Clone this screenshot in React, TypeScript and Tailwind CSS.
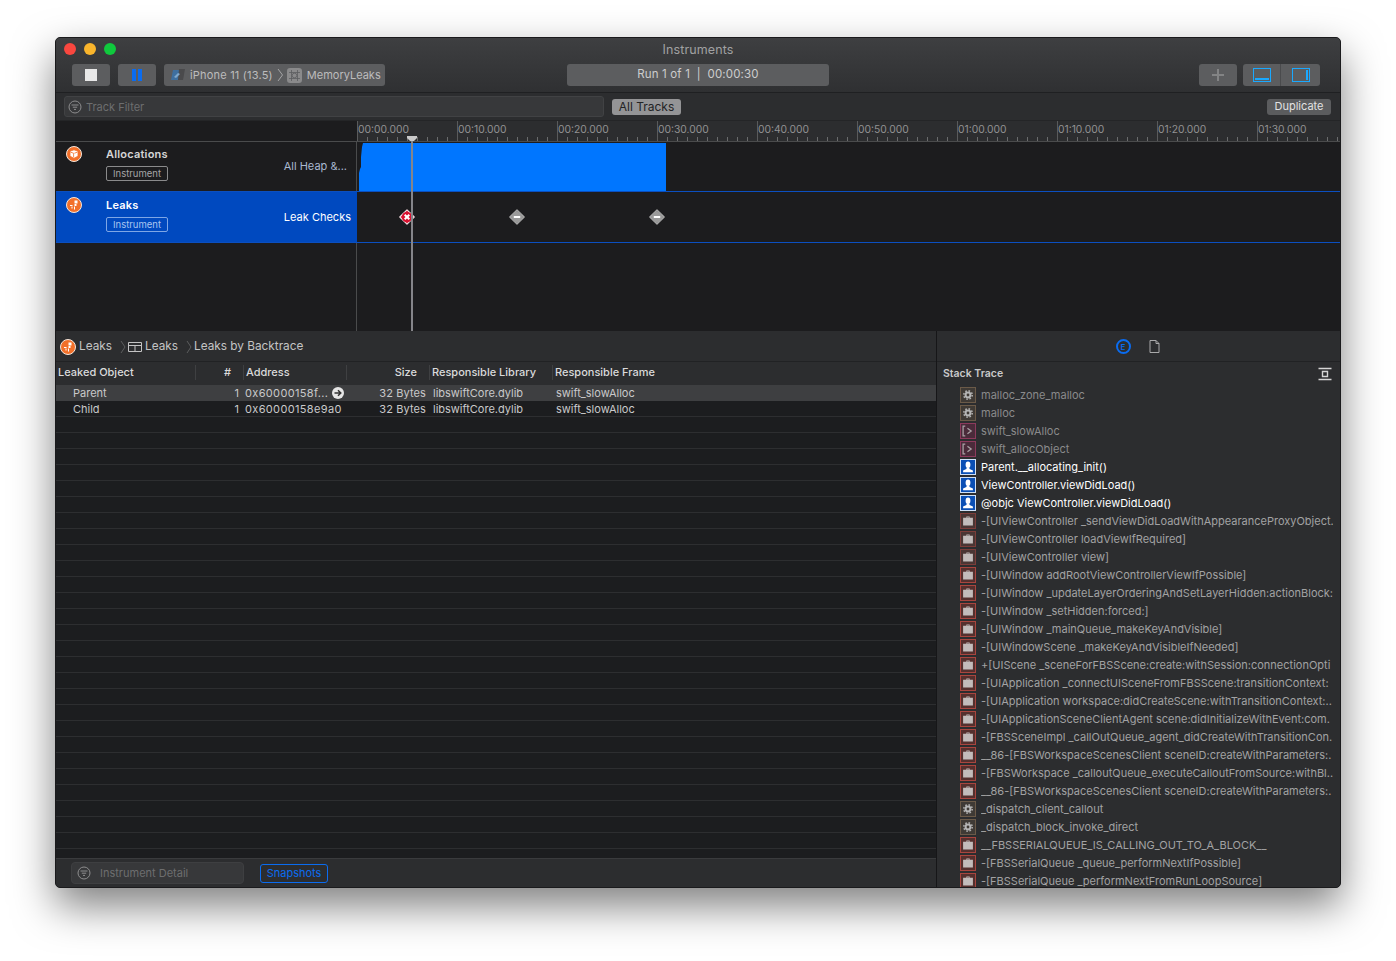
import type { ReactNode } from "react";

const font = { fontFamily: "Inter, 'Liberation Sans', sans-serif" };

type FrameKind = "gear" | "term" | "user" | "case";

const FRAMES: [FrameKind, string][] = [
  ["gear", "malloc_zone_malloc"],
  ["gear", "malloc"],
  ["term", "swift_slowAlloc"],
  ["term", "swift_allocObject"],
  ["user", "Parent.__allocating_init()"],
  ["user", "ViewController.viewDidLoad()"],
  ["user", "@objc ViewController.viewDidLoad()"],
  ["case", "-[UIViewController _sendViewDidLoadWithAppearanceProxyObject."],
  ["case", "-[UIViewController loadViewIfRequired]"],
  ["case", "-[UIViewController view]"],
  ["case", "-[UIWindow addRootViewControllerViewIfPossible]"],
  ["case", "-[UIWindow _updateLayerOrderingAndSetLayerHidden:actionBlock:"],
  ["case", "-[UIWindow _setHidden:forced:]"],
  ["case", "-[UIWindow _mainQueue_makeKeyAndVisible]"],
  ["case", "-[UIWindowScene _makeKeyAndVisibleIfNeeded]"],
  ["case", "+[UIScene _sceneForFBSScene:create:withSession:connectionOpti"],
  ["case", "-[UIApplication _connectUISceneFromFBSScene:transitionContext:"],
  ["case", "-[UIApplication workspace:didCreateScene:withTransitionContext:.."],
  ["case", "-[UIApplicationSceneClientAgent scene:didInitializeWithEvent:com."],
  ["case", "-[FBSSceneImpl _callOutQueue_agent_didCreateWithTransitionCon."],
  ["case", "__86-[FBSWorkspaceScenesClient sceneID:createWithParameters:."],
  ["case", "-[FBSWorkspace _calloutQueue_executeCalloutFromSource:withBl.."],
  ["case", "__86-[FBSWorkspaceScenesClient sceneID:createWithParameters:."],
  ["gear", "_dispatch_client_callout"],
  ["gear", "_dispatch_block_invoke_direct"],
  ["case", "__FBSSERIALQUEUE_IS_CALLING_OUT_TO_A_BLOCK__"],
  ["case", "-[FBSSerialQueue _queue_performNextIfPossible]"],
  ["case", "-[FBSSerialQueue _performNextFromRunLoopSource]"],
];

const RULER = [
  "00:00.000",
  "00:10.000",
  "00:20.000",
  "00:30.000",
  "00:40.000",
  "00:50.000",
  "01:00.000",
  "01:10.000",
  "01:20.000",
  "01:30.000",
];

function FilterIcon() {
  return (
    <svg width="14" height="14" viewBox="0 0 14 14" fill="none" stroke="#8d8d8e" className="shrink-0">
      <circle cx="7" cy="7" r="6" />
      <path d="M3.5 5h7M4.8 7.2h4.4M6 9.4h2" />
    </svg>
  );
}

function TrackIcon({ kind }: { kind: "box" | "leak" }) {
  return (
    <svg width="16" height="16" viewBox="0 0 16 16" className="shrink-0">
      <circle cx="8" cy="8" r="7.5" fill="#f2702a" stroke="#f4e6dc" strokeWidth="1" />
      {kind === "box" ? (
        <path d="M4 5.2 8 3.8l4 1.4v5L8 12.2 4 10.2zM4.6 6.2 7.6 7.2v3.8M8.4 7.2l3-1" fill="#fff" stroke="#f2702a" strokeWidth="0.8" />
      ) : (
        <path d="M8.5 3.5h3v3h-3zM8.5 7h2v2h-2zM4 8h2.5v1H4zM8 9.5h1v3H8zM5.5 9.5h1v2h-1z" fill="#fff" />
      )}
    </svg>
  );
}

function Diamond({ error }: { error?: boolean }) {
  return (
    <svg width="16" height="16" viewBox="0 0 16 16">
      <path
        d="M8 .8 15.2 8 8 15.2.8 8z"
        fill={error ? "#d8112f" : "#8f8f90"}
        stroke={error ? "#f3dfe3" : "#a8a8a8"}
        strokeWidth="1.2"
        strokeLinejoin="round"
      />
      <circle cx="8" cy="8" r="5.2" fill={error ? "#d8112f" : "#9a9a9a"} />
      {error ? (
        <path d="m5.7 5.7 4.6 4.6m0-4.6-4.6 4.6" stroke="#fff" strokeWidth="2" />
      ) : (
        <path d="M4.8 8h6.4" stroke="#fff" strokeWidth="2" />
      )}
    </svg>
  );
}

function FrameIcon({ kind, dim }: { kind: FrameKind; dim: boolean }) {
  if (kind === "user") {
    return (
      <span className="flex h-4 w-4 shrink-0 items-center justify-center border border-[#cfe0f5] bg-[#0a4fb5]">
        <svg width="12" height="12" viewBox="0 0 11 11" fill="#fff">
          <ellipse cx="5.5" cy="3.4" rx="2.2" ry="3" />
          <path d="M4.4 6h2.2l.4 1.4 3 1.2V10.4H1V8.6l3-1.2z" />
        </svg>
      </span>
    );
  }
  if (kind === "term") {
    return (
      <span className="flex h-4 w-4 shrink-0 items-center justify-center border border-[#8c3a5c] bg-[#4a2b3a]">
        <svg width="12" height="12" viewBox="0 0 11 11" fill="none" stroke="#a8a0a4" strokeWidth="1.2">
          <path d="M3 1H1v9h2M5 3l3.4 2.5L5 8" />
        </svg>
      </span>
    );
  }
  if (kind === "gear") {
    return (
      <span className="flex h-4 w-4 shrink-0 items-center justify-center border border-[#6b5a48] bg-[#3f3a35]">
        <svg width="12" height="12" viewBox="0 0 12 12" fill="none" stroke="#b5b5b5">
          <circle cx="6" cy="6" r="2.4" strokeWidth="2" />
          <circle cx="6" cy="6" r="4.2" strokeWidth="1.5" strokeDasharray="1.6 1.7" />
        </svg>
      </span>
    );
  }
  return (
    <span
      className={
        dim
          ? "flex h-4 w-4 shrink-0 items-center justify-center border border-[#7c3d39] bg-[#4a3634]"
          : "flex h-4 w-4 shrink-0 items-center justify-center border border-[#a8453e] bg-[#54302e]"
      }
    >
      <svg width="12" height="12" viewBox="0 0 11 11" fill="#c2bcbb">
        <path d="M4 1.4h3v1.2h3V9.6H1V2.6h3zM4.8 2.2v.5h1.4v-.5z" />
      </svg>
    </span>
  );
}

function ToolButton({ children, className }: { children: ReactNode; className: string }) {
  return (
    <div className={`flex h-[22px] items-center justify-center rounded-[3px] bg-[#5c5d5f] ${className}`}>
      {children}
    </div>
  );
}

function Toolbar() {
  return (
    <div className="relative h-[55px] shrink-0 border-b border-[#1f2022] bg-gradient-to-b from-[#3e3f41] to-[#2f3032]">
      <div className="absolute left-[8px] top-[5px] flex gap-[8px]">
        <span className="h-3 w-3 rounded-full bg-[#f9473f]" />
        <span className="h-3 w-3 rounded-full bg-[#f9b52c]" />
        <span className="h-3 w-3 rounded-full bg-[#10c93d]" />
      </div>
      <div className="flex h-[26px] items-start justify-center pt-[4px] text-[12.5px] leading-4 tracking-[0.1px] text-[#a1a1a2]">
        Instruments
      </div>
      <div className="flex items-center pl-4">
        <ToolButton className="w-[38px]">
          <span className="h-3 w-3 bg-[#e8e8e8]" />
        </ToolButton>
        <ToolButton className="ml-2 w-[38px] gap-[2px]">
          <span className="h-3 w-1 bg-[#0a6cf0]" />
          <span className="h-3 w-1 bg-[#0a6cf0]" />
        </ToolButton>
        <ToolButton className="ml-2 w-[221px] justify-start pl-[6px] text-[11px] text-[#bcbcbd]">
          <svg width="15" height="14" viewBox="0 0 15 14" className="shrink-0">
            <path d="M3 2h11l-2 10H1z" fill="#3e6f9f" />
            <path d="M9 1h6l-2 11H8z" fill="#4a4a4c" />
            <path d="M4 9l4-4 2 1-4 4z" fill="#7fa8cc" />
          </svg>
          <span className="ml-[5px] whitespace-nowrap tracking-[0.2px]">iPhone 11 (13.5)</span>
          <svg width="7" height="14" viewBox="0 0 7 14" fill="none" stroke="#a5a5a6" className="ml-[4px] shrink-0">
            <path d="m1 1 4.5 6L1 13" />
          </svg>
          <span className="ml-[3px] flex h-[15px] w-[15px] shrink-0 items-center justify-center rounded-[3px] bg-[#8a8a8b]">
            <svg width="11" height="11" viewBox="0 0 11 11" fill="none" stroke="#5c5d5f" strokeWidth="0.8">
              <circle cx="5.5" cy="5.5" r="2.3" />
              <path d="M0 2.5h11M0 8.5h11M2.5 0v11M8.5 0v11" />
            </svg>
          </span>
          <span className="ml-[5px] whitespace-nowrap">MemoryLeaks</span>
        </ToolButton>
        <ToolButton className="ml-[182px] w-[262px] text-[11.5px] tracking-[0.15px] text-[#cdcdce]">
          <span className="whitespace-pre">Run 1 of 1  |  00:00:30</span>
        </ToolButton>
        <ToolButton className="ml-[370px] w-[38px]">
          <svg width="14" height="14" viewBox="0 0 14 14" stroke="#838485" strokeWidth="2">
            <path d="M7 1v12M1 7h12" />
          </svg>
        </ToolButton>
        <ToolButton className="ml-[6px] w-[77px]">
          <div className="flex h-full w-[38px] items-center justify-center border-r border-[#4a4b4d]">
            <span className="flex h-[14px] w-[18px] items-end border border-[#1aa9ff] p-[1px]">
              <span className="h-[2px] w-full bg-[#1aa9ff]" />
            </span>
          </div>
          <div className="flex h-full flex-1 items-center justify-center">
            <span className="flex h-[14px] w-[18px] justify-end border border-[#1aa9ff] p-[1px]">
              <span className="h-full w-[2px] bg-[#1aa9ff]" />
            </span>
          </div>
        </ToolButton>
      </div>
    </div>
  );
}

function FilterBar() {
  return (
    <div className="flex h-[28px] shrink-0 items-center border-b border-[#242527] bg-[#2c2d2f] pl-2">
      <div className="flex h-[21px] w-[540px] items-center gap-[4px] rounded-[3px] border border-[#414244] bg-[#37383a] pl-[3px] text-[11px] text-[#6d6e6f]">
        <FilterIcon />
        <span className="pt-[1px]">Track Filter</span>
      </div>
      <div className="ml-2 flex h-4 w-[69px] items-center justify-center rounded-[3px] bg-[#949496] text-[12px] text-[#232325]">
        All Tracks
      </div>
      <div className="ml-[586px] flex h-4 w-[64px] items-center justify-center rounded-[3px] bg-[#5b5c5e] text-[11px] text-[#e2e2e2]">
        Duplicate
      </div>
    </div>
  );
}

function Ruler() {
  return (
    <div className="flex h-[21px] shrink-0 border-b border-[#4a4b4c]">
      <div className="w-[301px] shrink-0 bg-[#1c1c1e]" />
      <div className="flex flex-1 overflow-hidden bg-[#2c2d2f]">
        {RULER.map((t) => (
          <div key={t} className="relative h-full w-[100px] shrink-0 border-l border-[#5a5b5c] text-[10.3px] leading-[17px] text-[#929293]">
            {t}
            <svg width="100" height="5" className="absolute bottom-0 left-0" stroke="#6a6b6c">
              <path d="M9.5 1v4M19.5 1v4M29.5 1v4M39.5 1v4M49.5 1v4M59.5 1v4M69.5 1v4M79.5 1v4M89.5 1v4" />
            </svg>
          </div>
        ))}
      </div>
    </div>
  );
}

function TrackHeader({
  title,
  detail,
  kind,
  selected,
}: {
  title: string;
  detail: string;
  kind: "box" | "leak";
  selected?: boolean;
}) {
  return (
    <div
      className={
        selected
          ? "flex h-full w-[301px] shrink-0 bg-[#0049bf] pl-[10px] pt-[5px] text-white"
          : "flex h-full w-[301px] shrink-0 border-r border-[#4a4b4c] bg-[#1c1c1e] pl-[10px] pt-[4px] text-[#d6d6d6]"
      }
    >
      <TrackIcon kind={kind} />
      <div className="ml-[24px] flex flex-col items-start">
        <div className="text-[11px] font-semibold leading-4 tracking-[0.2px]">{title}</div>
        <div
          className={
            selected
              ? "mt-[4px] flex h-[15px] w-[62px] items-center justify-center rounded-[2px] border border-[#7ea6e6] pt-[1px] text-[9.5px] text-[#a9c5f0]"
              : "mt-[4px] flex h-[15px] w-[62px] items-center justify-center rounded-[2px] border border-[#8a8a8b] pt-[1px] text-[9.5px] text-[#a5a5a6]"
          }
        >
          Instrument
        </div>
      </div>
      <div
        className={
          selected
            ? "ml-auto mr-[6px] mt-[12px] whitespace-nowrap text-[11px] leading-4 text-white"
            : "ml-auto mr-[9px] mt-[12px] whitespace-nowrap text-[11px] leading-4 text-[#a9b8d0]"
        }
      >
        {detail}
      </div>
    </div>
  );
}

function Timeline() {
  return (
    <div className="relative shrink-0">
      <Ruler />
      <div className="flex h-[50px] border-b border-[#0b4fc0]">
        <TrackHeader title="Allocations" detail="All Heap &..." kind="box" />
        <div className="flex-1 bg-[#1c1c1e] pt-[1px]">
          <svg width="309" height="48" viewBox="0 0 309 48" className="block">
            <path d="M2 48V30l1-4 1-2V14l1-10 1-4h303v48z" fill="#0076ff" />
          </svg>
        </div>
      </div>
      <div className="flex h-[51px] border-b border-[#0b4fc0]">
        <TrackHeader title="Leaks" detail="Leak Checks" kind="leak" selected />
        <div className="relative flex-1 bg-[#1c1c1e]">
          <span className="absolute left-[42px] top-[17px]">
            <Diamond error />
          </span>
          <span className="absolute left-[152px] top-[17px]">
            <Diamond />
          </span>
          <span className="absolute left-[292px] top-[17px]">
            <Diamond />
          </span>
        </div>
      </div>
      <div className="flex h-[88px]">
        <div className="w-[301px] shrink-0 border-r border-[#4a4b4c] bg-[#1c1c1e]" />
        <div className="flex-1 bg-[#1c1c1e]" />
      </div>
      {/* playhead */}
      <div className="absolute bottom-0 left-[355px] top-[16px] w-[2px] bg-[#85858a]" />
      <svg width="10" height="5" className="absolute left-[351px] top-[15px]">
        <path d="M0 0h10v2L7 5H3L0 2z" fill="#c9c9c9" />
      </svg>
    </div>
  );
}

function Breadcrumb() {
  const chevron = (
    <svg width="6" height="14" viewBox="0 0 6 14" fill="none" stroke="#5c5d5e" className="shrink-0">
      <path d="m1 1 4 6-4 6" />
    </svg>
  );
  return (
    <div className="flex h-[31px] shrink-0 items-center border-b border-[#212224] bg-[#2c2d2f] pl-[4px] pt-[2px] text-[11.8px] text-[#c4c4c5]">
      <TrackIcon kind="leak" />
      <span className="ml-[3px]">Leaks</span>
      <span className="ml-2">{chevron}</span>
      <svg width="14" height="10" viewBox="0 0 14 10" fill="none" stroke="#c4c4c5" className="ml-[2px]">
        <path d="M.5.5h13v9H.5zM.5 3.5h13M7 3.5v6" />
      </svg>
      <span className="ml-[3px]">Leaks</span>
      <span className="ml-2">{chevron}</span>
      <span className="ml-[2px]">Leaks by Backtrace</span>
    </div>
  );
}

const GRID = "grid grid-cols-[140px_48px_103px_83px_123px_1fr]";

function LeakRow({ name, address, active }: { name: string; address: string; active?: boolean }) {
  return (
    <div
      className={
        active
          ? `${GRID} h-4 bg-[#3e3f41] text-[11px] leading-4 text-[#c9c9ca]`
          : `${GRID} h-4 border-b border-[#2d2e30] text-[11px] leading-4 text-[#c9c9ca]`
      }
    >
      <div className="pl-[17px]">{name}</div>
      <div className="pr-[5px] text-right">1</div>
      <div className="flex items-center whitespace-nowrap pl-[1px] tracking-[0.35px]">
        {address}
        {active && (
          <svg width="12" height="12" viewBox="0 0 12 12" className="ml-[4px]">
            <circle cx="6" cy="6" r="6" fill="#e6e6e6" />
            <path d="M2.5 6h6M6 3.2 8.8 6 6 8.8" fill="none" stroke="#333" strokeWidth="1.5" />
          </svg>
        )}
      </div>
      <div className="pr-[4px] text-right tracking-[0.1px]">32 Bytes</div>
      <div className="pl-[3px]">libswiftCore.dylib</div>
      <div className="pl-[3px]">swift_slowAlloc</div>
    </div>
  );
}

function LeakTable() {
  const headerCell = "flex h-[15px] items-center border-r border-[#3f4042]";
  return (
    <div className="flex min-w-0 flex-1 flex-col border-r border-[#161618] bg-[#1c1d1f]">
      <Breadcrumb />
      <div className={`${GRID} h-[23px] shrink-0 items-center bg-[#2c2d2f] pb-[2px] text-[11px] font-medium text-[#dadadb]`}>
        <div className={`${headerCell} pl-[2px]`}>Leaked Object</div>
        <div className={`${headerCell} justify-end pr-3`}>#</div>
        <div className={`${headerCell} pl-[2px]`}>Address</div>
        <div className={`${headerCell} justify-end pr-3`}>Size</div>
        <div className={`${headerCell} pl-[2px]`}>Responsible Library</div>
        <div className="pl-[2px]">Responsible Frame</div>
      </div>
      <div className="min-h-0 flex-1 overflow-hidden">
        <LeakRow name="Parent" address="0x60000158f..." active />
        <LeakRow name="Child" address="0x60000158e9a0" />
        {Array.from({ length: 28 }, (_, i) => (
          <div key={i} className="h-4 border-b border-[#2d2e30]" />
        ))}
      </div>
      <div className="flex h-[29px] shrink-0 items-center border-t border-[#3a3b3d] bg-[#2c2d2f] pl-[15px]">
        <div className="flex h-[22px] w-[173px] items-center gap-[9px] rounded-[4px] border border-[#3e3f41] bg-[#37383a] pl-[5px] text-[11px] text-[#6d6e6f]">
          <FilterIcon />
          Instrument Detail
        </div>
        <div className="ml-[16px] flex h-[19px] w-[68px] items-center justify-center rounded-[3px] border border-[#0a6cf0] text-[11px] text-[#0a6cf0]">
          Snapshots
        </div>
      </div>
    </div>
  );
}

function StackPanel() {
  return (
    <div className="flex w-[403px] shrink-0 flex-col bg-[#2c2d2f]">
      <div className="flex h-[31px] shrink-0 items-center justify-center gap-[18px] border-b border-[#212224] pr-[2px] pt-[1px]">
        <span className="flex h-[15px] w-[15px] items-center justify-center rounded-full border-2 border-[#0a6cf0] text-[8px] font-semibold leading-none text-[#0a6cf0]">
          E
        </span>
        <svg width="11" height="13" viewBox="0 0 11 13" fill="none" stroke="#a9a9aa">
          <path d="M1 .5h6l3 3v9H1zM7 .5v3h3" />
        </svg>
      </div>
      <div className="flex h-[24px] shrink-0 items-center justify-between pl-[6px] pr-[8px] text-[10.5px] font-semibold text-[#c9c9ca]">
        Stack Trace
        <svg width="14" height="14" viewBox="0 0 14 14" fill="none" stroke="#d5d5d5">
          <path d="M.5 1.5h13M.5 12.5h13M4.5 4.5h5v5h-5z" strokeWidth="1.4" />
        </svg>
      </div>
      <div className="min-h-0 flex-1 overflow-hidden">
        {FRAMES.map(([kind, text], i) => (
          <div key={i} className="flex h-[18px] items-center pl-[23px]">
            <FrameIcon kind={kind} dim={i < 10} />
            <span
              className={
                kind === "user"
                  ? "ml-[5px] w-[352px] shrink-0 overflow-hidden whitespace-nowrap text-[11px] text-white"
                  : i < 4
                    ? "ml-[5px] w-[352px] shrink-0 overflow-hidden whitespace-nowrap text-[11px] text-[#8a8a8b]"
                    : "ml-[5px] w-[352px] shrink-0 overflow-hidden whitespace-nowrap text-[11px] text-[#a2a2a3]"
              }
            >
              {text}
            </span>
          </div>
        ))}
      </div>
    </div>
  );
}

export default function App() {
  return (
    <div className="h-[961px] w-[1396px] overflow-hidden bg-white pl-[55px] pt-[37px] antialiased" style={font}>
      <div className="flex h-[851px] w-[1286px] flex-col overflow-hidden rounded-[5px] border border-[#1a1a1c] bg-[#1c1c1e] shadow-[0_18px_42px_rgba(0,0,0,0.5)]">
        <Toolbar />
        <FilterBar />
        <Timeline />
        <div className="flex min-h-0 flex-1">
          <LeakTable />
          <StackPanel />
        </div>
      </div>
    </div>
  );
}
